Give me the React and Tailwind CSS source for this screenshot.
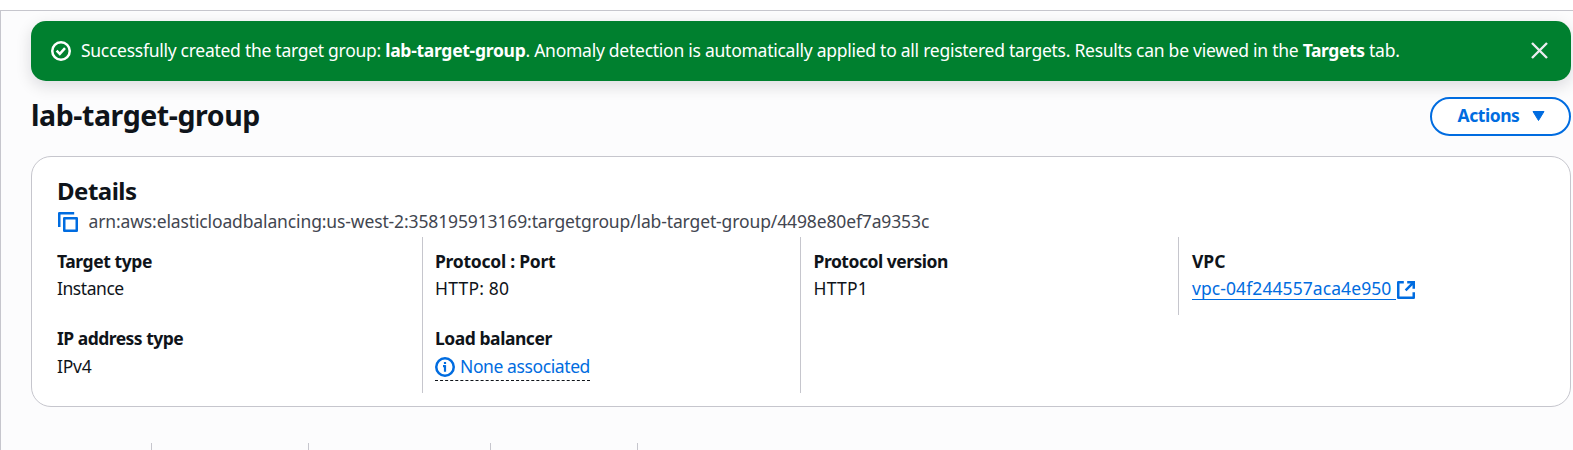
const tabDividers = ["w-[151px]", "w-[157px]", "w-[182px]", "w-[147px]"];

function SuccessIcon() {
  return (
    <svg className="size-5 shrink-0" viewBox="0 0 20 20" fill="none" stroke="currentColor" strokeWidth="2.5">
      <circle cx="10" cy="10" r="8.75" />
      <path d="M5.6 9.7l3.2 3.2 5.2-5.7" />
    </svg>
  );
}

function CloseIcon() {
  return (
    <svg className="h-[17px] w-[17px]" viewBox="0 0 17 17" fill="none" stroke="currentColor" strokeWidth="2.4">
      <path d="M1 1l15 15M16 1L1 16" />
    </svg>
  );
}

function CopyIcon() {
  return (
    <svg className="size-5 shrink-0" viewBox="0 0 20 20" fill="none" stroke="currentColor" strokeWidth="2.5" strokeLinejoin="round">
      <path d="M16.2 1.25H1.25V15" />
      <rect x="6.25" y="6.25" width="12.5" height="12.5" />
    </svg>
  );
}

function ExternalIcon() {
  return (
    <svg className="h-[18px] w-[18px]" viewBox="0 0 18 18" fill="none" stroke="currentColor" strokeWidth="2.5" strokeLinejoin="round">
      <path d="M6.8 1.25H1.25v15.5h15.5v-5.6" />
      <path d="M10.2 1.25h6.55v6.55M16.3 1.7L8.6 9.4" strokeLinejoin="miter" />
    </svg>
  );
}

function InfoIcon() {
  return (
    <svg className="size-5 shrink-0" viewBox="0 0 20 20" fill="none" stroke="currentColor">
      <circle cx="10" cy="10" r="8.75" strokeWidth="2.5" />
      <path d="M8 9.2h2.6M10 8.2v6.6M10 5v2" strokeWidth="2.2" />
    </svg>
  );
}

function Field({ label, labelClass, className = "", children }) {
  return (
    <div className={"h-[78px] pt-3 leading-[25px] " + className}>
      <div className={"font-bold " + labelClass}>{label}</div>
      {children}
    </div>
  );
}

export default function App() {
  return (
    <div className="h-[450px] overflow-hidden bg-white pt-[10px] font-['Noto_Sans',sans-serif] text-[17.5px] text-[#0f141a]">
      <main className="flex h-[440px] flex-col border-t border-l border-[#c6c6cd] bg-[#fcfcfd] pt-[10px] pr-[2px]">
        <div className="ml-[30px] flex h-[60px] shrink-0 items-center rounded-[15px] bg-[#00802f] pr-[23px] pl-5 text-white shadow-[0_5px_15px_1px_rgba(0,7,22,0.12)]">
          <SuccessIcon />
          <p className="ml-[10px] flex-1 pb-[2px] leading-[25px] whitespace-pre">
            <span className="tracking-[-0.275px]">Successfully created the target group: </span>
            <b className="tracking-[-0.28px]">lab-target-group</b>
            <span className="tracking-[-0.258px]">. Anomaly detection is automatically applied to all registered targets. Results can be viewed in the </span>
            <b className="tracking-[-0.4px]">Targets</b>
            <span className="tracking-[-0.2px]"> tab.</span>
          </p>
          <button aria-label="Dismiss" className="pb-px text-[#ebebf0]"><CloseIcon /></button>
        </div>

        <div className="mt-4 ml-[30px] flex h-[39px] shrink-0 items-center justify-between">
          <h1 className="pb-[3px] text-[28.5px] leading-[38px] font-bold tracking-[-0.42px]">lab-target-group</h1>
          <button className="flex h-[39px] w-[141px] items-center rounded-full border-2 border-[#006ce0] bg-white pl-[25.5px] text-[#006ce0]">
            <span className="pb-[2px] leading-[25px] font-bold tracking-[-0.45px]">Actions</span>
            <svg className="mb-px ml-[13px] h-[10px] w-[13px]" viewBox="0 0 13 10" fill="currentColor" stroke="currentColor" strokeLinejoin="round">
              <path d="M1 .5h11L6.5 9.5z" />
            </svg>
          </button>
        </div>

        <section className="mt-5 ml-[30px] h-[251px] shrink-0 rounded-[20px] border border-[#c6c6cd] bg-white pt-[18px] pl-[25px]">
          <h2 className="text-2xl leading-[31px] font-bold tracking-[-0.5px]">Details</h2>
          <div className="mt-[3px] flex h-[25px] items-center text-[#424650]">
            <span className="ml-px text-[#006ce0]"><CopyIcon /></span>
            <span className="ml-[10.5px] tracking-[-0.13px]">arn:aws:elasticloadbalancing:us-west-2:358195913169:targetgroup/lab-target-group/4498e80ef7a9353c</span>
          </div>
          <div className="mt-[3px] grid grid-cols-[365px_378px_378px_1fr] items-start">
            <div>
              <Field label="Target type" labelClass="tracking-[-0.42px]">
                <div className="mt-[2px] tracking-[-0.45px]">Instance</div>
              </Field>
              <Field label="IP address type" labelClass="-mt-px tracking-[-0.52px]">
                <div className="mt-[3px] tracking-[-0.2px]">IPv4</div>
              </Field>
            </div>
            <div className="h-[156px] border-l border-[#c6c6cd] pl-3">
              <Field label="Protocol : Port" labelClass="tracking-[-0.26px]">
                <div className="mt-[2px] tracking-[0.2px]">HTTP: 80</div>
              </Field>
              <Field label="Load balancer" labelClass="-mt-px tracking-[-0.46px]">
                <div className="mt-[3px] flex h-[27px] w-fit items-start border-b border-dashed border-[#0f141a] text-[#006ce0]">
                  <span className="mt-[3px]"><InfoIcon /></span>
                  <span className="ml-[5px] tracking-[-0.4px]">None associated</span>
                </div>
              </Field>
            </div>
            <div className="h-[156px] border-l border-[#c6c6cd] pl-[12.5px]">
              <Field label="Protocol version" labelClass="tracking-[-0.48px]">
                <div className="mt-[2px] tracking-[0.2px]">HTTP1</div>
              </Field>
            </div>
            <div className="border-l border-[#c6c6cd] pl-[13px]">
              <Field label="VPC" labelClass="">
                <a className="mt-[2px] flex items-start text-[#006ce0]">
                  <span className="h-[24px] w-[204px] border-b border-[#006ce0] tracking-[0.08px]">vpc-04f244557aca4e950</span>
                  <span className="mt-[5px] ml-px"><ExternalIcon /></span>
                </a>
              </Field>
            </div>
          </div>
        </section>

        <div className="mt-[36px] flex h-[7px] shrink-0">
          {tabDividers.map((w) => (
            <div key={w} className={"border-r border-[#c6c6cd] " + w} />
          ))}
        </div>
      </main>
    </div>
  );
}
